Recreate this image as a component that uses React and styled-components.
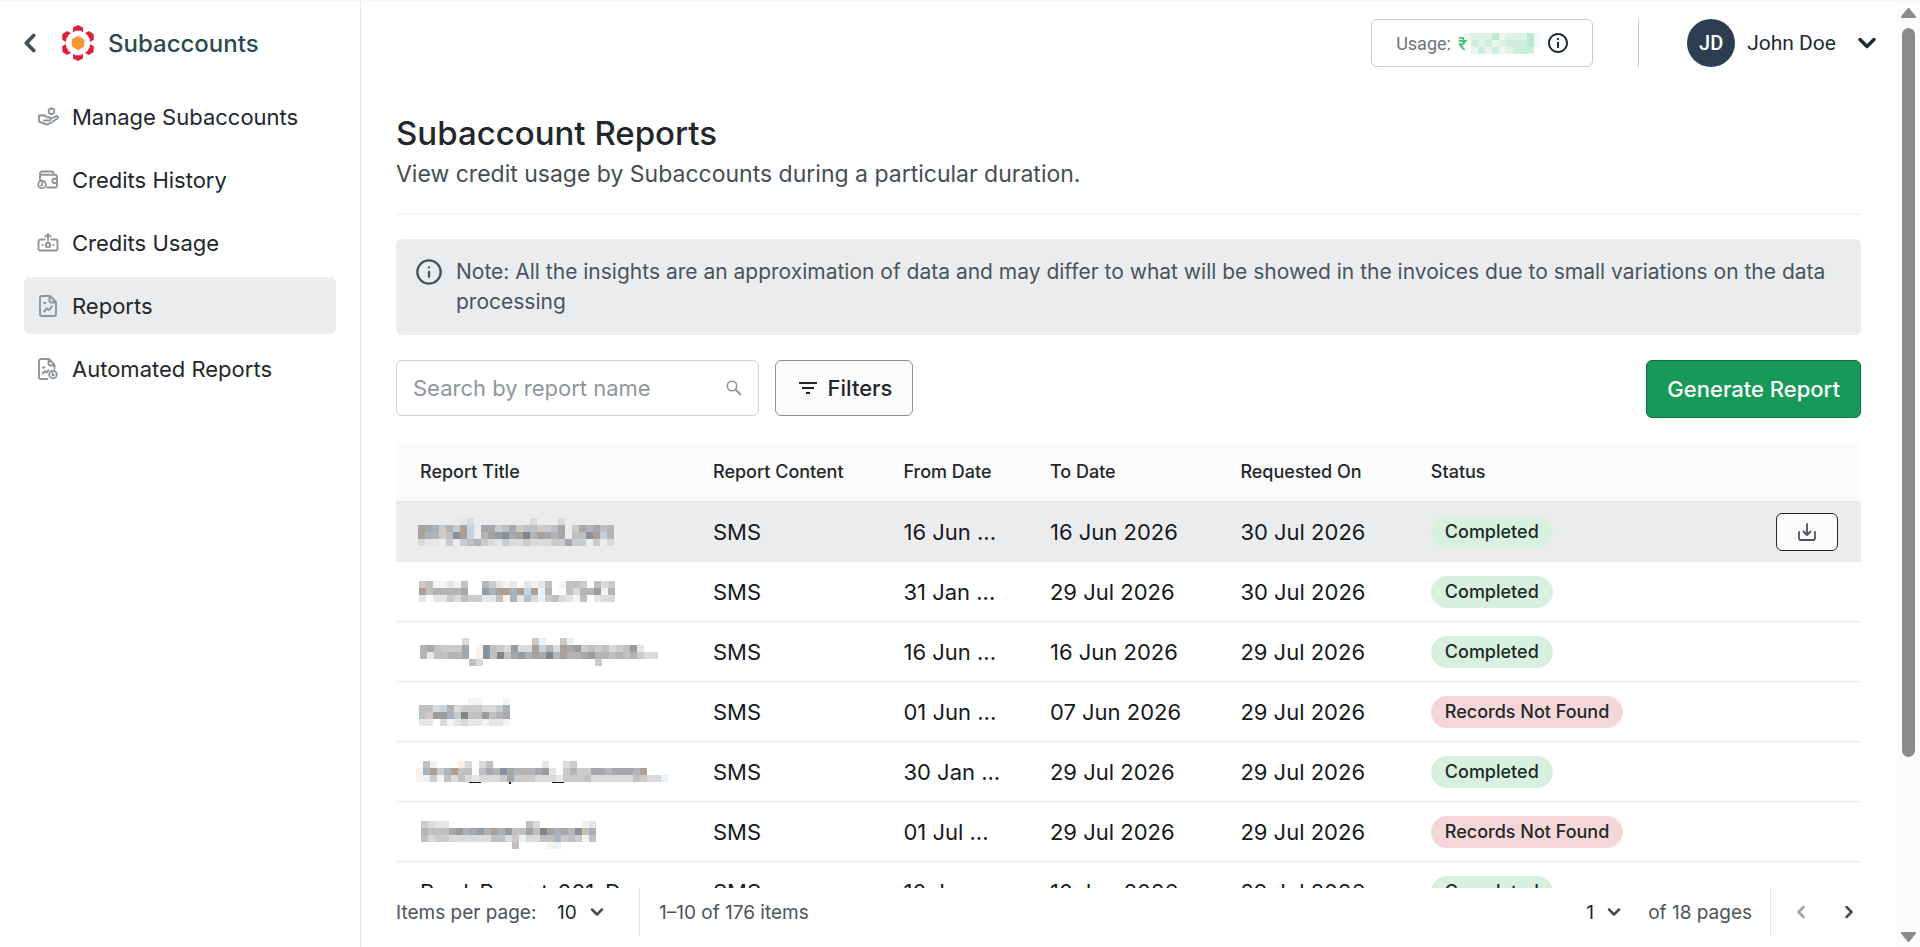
import React, { useState } from 'react'
import styled, { createGlobalStyle } from 'styled-components'
import { ChevronDown, ChevronLeft, ChevronRight, Info } from 'lucide-react'
import { MdFilterList, MdInfoOutline } from 'react-icons/md'

const NAV = [
    { label: 'Manage Subaccounts', icon: 'hand' },
    { label: 'Credits History', icon: 'wallet' },
    { label: 'Credits Usage', icon: 'cash' },
    { label: 'Reports', icon: 'report', active: true },
    { label: 'Automated Reports', icon: 'auto' },
]

// one letter per mosaic cell, '.' is empty
const SHADES = {
    1: '#f4f4f4', 2: '#e5e6e7', 3: '#d8dadb', 4: '#cacbcd', 5: '#bfc0c2', 6: '#b2b4b6', 7: '#a5a7aa', 8: '#999b9d', 9: '#828588',
    b: '#c6d2df', B: '#a9b2bb', d: '#8a919c', w: '#d0c8c4', W: '#aba098', c: '#f8f2ea', i: '#eaf1f8',
    h: '#e8f7f0', g: '#ddf3e7', G: '#cdeede', H: '#bce9d0', y: '#eefaff',
}

const ROWS = [
    {
        x: -2,
        mosaic: ['......23........3...3.......', 'W7B464Wb.774574554457.w76756', 'WB6w5dWb.6W8d7W96W767.55dWb6', '322.4.456432433433344744.4.3'],
        from: '16 Jun ...', to: '16 Jun 2026', on: '30 Jul 2026', status: 'Completed', hovered: true,
    },
    {
        x: -1,
        mosaic: ['w511215..64212.2125.1554.534', 'W566667..8BWWBWbWi6..5366816', '2.2243544225cB253i453215.233'],
        from: '31 Jan ...', to: '29 Jul 2026', on: '30 Jul 2026', status: 'Completed',
    },
    {
        x: 0,
        mosaic: ['......3.........wi..wi............', '6754447.cd543833Wb63W78454534582..', '6255667.cd59578BW796W6678665656433', '.......53................4........'],
        from: '16 Jun ...', to: '16 Jun 2026', on: '29 Jul 2026', status: 'Completed',
    },
    {
        x: -1,
        mosaic: ['.......11...1', '553b63444334B', '5w88B49558567', '22.312322c221'],
        from: '01 Jun ...', to: '07 Jun 2026', on: '29 Jul 2026', status: 'Records Not Found',
    },
    {
        x: -4,
        mosaic: ['.5i...c3.35.......2..34.............', 'cBW46W55.576d7666782.46447767776W...', 'ciw153532333474w4333244453333335433i'],
        marks: [[49, 12, 1], [89, 2, 2], [132, 12, 1]],
        from: '30 Jan ...', to: '29 Jul 2026', on: '29 Jul 2026', status: 'Completed',
    },
    {
        x: 1,
        y: 3,
        mosaic: ['4322...........53......c2', '655578B78BWB855W59WB76d5B', '5344333333553wi3355B454c5', '.............5....ci.....'],
        from: '01 Jul ...', to: '29 Jul 2026', on: '29 Jul 2026', status: 'Records Not Found',
    },
    {
        title: 'Prod_Report_001_D...',
        from: '10 Jun ...', to: '10 Jun 2026', on: '29 Jul 2026', status: 'Completed',
    },
]

const USAGE = ['hgggHhgggHy', '.GgGhgGGGHy', '.hGhGhgGGG.']

const Mosaic = ({ cells, x = 0, y = 0, marks = [] }) => (
    <MosaicSvg width={cells[0].length * 7} height={cells.length * 7} shapeRendering="crispEdges" aria-hidden="true">
        {cells.map((line, r) => line.split('').map((key, c) => (
            SHADES[key] && <rect key={`${r}-${c}`} x={x + c * 7} y={y + r * 7} width="7" height="7" fill={SHADES[key]} />
        )))}
        {marks.map(([left, width, height]) => (
            <rect key={left} x={left} y={cells.length * 7} width={width} height={height} fill="#16191c" />
        ))}
    </MosaicSvg>
)

const Logo = () => (
    <svg width="36" height="36" viewBox="-18 -18 36 36" aria-hidden="true">
        <path d="M0-7.2 6.2-3.6V3.6L0 7.2-6.2 3.6V-3.6z" fill="#f79634" />
        {[0, 60, 120, 180, 240, 300].map(deg => (
            <path key={deg} transform={`rotate(${deg})`} d="M0-18 5-15.400V-10.800L2.600-12.200H-2.600L-5-10.800V-15.400z" fill="#e01f3d" />
        ))}
    </svg>
)

const NavIcon = ({ name }) => {
    const shapes = {
        hand: (
            <>
                <path d="M14.500 2.200 17.200 3.700V6.800L14.500 8.300 11.800 6.800V3.700z" />
                <path d="M7 14.500h5a1.600 1.600 0 0 0 0-3.200H9.800L7.500 9.300 2 9.500V15.500L9.500 18.500 13 17.500 20.300 12.500a1.300 1.300 0 0 0-1.500-2.200L14 12.500" />
            </>
        ),
        wallet: (
            <>
                <path d="M3 11V4.500a2 2 0 0 1 2-2H14.500a2 2 0 0 1 2 2V6M3 5.800H18a2 2 0 0 1 2 2V16.500a2 2 0 0 1-2 2H10" />
                <path d="M20 9.800H17.500a2 2 0 0 0 0 4.200H20" />
                <circle cx="5" cy="15.500" r="3.800" />
                <path d="M5.300 13.800V15.800L4 16.600" />
            </>
        ),
        cash: (
            <>
                <path d="M7.500 7.500H3.500a2 2 0 0 0-2 2V16.500a2 2 0 0 0 2 2H18.500a2 2 0 0 0 2-2V9.500a2 2 0 0 0-2-2H14.500" />
                <path d="M11 8.500V2.500M8.500 4.500 11 2.200 13.500 4.500" />
                <circle cx="11" cy="13" r="2.200" />
                <path d="M5.500 13h.1M16.500 13h.1" />
            </>
        ),
        report: (
            <>
                <path d="M13 1H5a2 2 0 0 0-2 2V19a2 2 0 0 0 2 2H17a2 2 0 0 0 2-2V7zM12.500 1.500V5.500a2 2 0 0 0 2 2H18.500" />
                <path d="M7 8h1.500M7 16.500 10 13.500 12 15 15 11.500" />
            </>
        ),
        auto: (
            <>
                <path d="M10.500 21H4a2 2 0 0 1-2-2V3a2 2 0 0 1 2-2H12L17.500 7V10.500M11.500 1.500V5.500a2 2 0 0 0 2 2H17" />
                <path d="M6 9.500h1.500M5.500 15.500 8 13 10 14.500 11.500 12" />
                <circle cx="16" cy="16.500" r="3.800" />
                <path d="M15.500 15V17H17" />
            </>
        ),
    }
    return (
        <svg width="22" height="22" viewBox="0 0 22 22" fill="none" stroke="#8f969d" strokeWidth="1.900" strokeLinecap="round" strokeLinejoin="round" aria-hidden="true">
            {shapes[name]}
        </svg>
    )
}

const SearchIcon = () => (
    <svg width="16" height="16" viewBox="0 0 16 16" fill="none" stroke="#8f969d" strokeWidth="1.600" aria-hidden="true">
        <circle cx="6" cy="6" r="4.700" />
        <path d="M9.500 9.500 15 15" strokeWidth="2" />
    </svg>
)

const DownloadIcon = () => (
    <svg width="18" height="18" viewBox="0 0 18 18" fill="none" stroke="#4a525e" strokeWidth="1.800" strokeLinecap="round" strokeLinejoin="round" aria-hidden="true">
        <path d="M9 1V12M5.500 8.500 9 12 12.500 8.500M1 9V15.500a1.500 1.500 0 0 0 1.500 1.500H15.500a1.500 1.500 0 0 0 1.500-1.500V9" />
    </svg>
)

const Dropdown = ({ label, options, value, onChange }) => (
    <SelectWrap>
        <select aria-label={label} value={value} onChange={e => onChange(e.target.value)}>
            {options.map(o => <option key={o}>{o}</option>)}
        </select>
        <ChevronDown size={20} strokeWidth={3} />
    </SelectWrap>
)

const App = () => {
    const [query, setQuery] = useState('')
    const [perPage, setPerPage] = useState('10')
    const [page, setPage] = useState('1')

    return (
        <>
            <GlobalStyle />
            <Shell>
                <Sidebar>
                    <Brand>
                        <BackButton type="button" aria-label="Back"><ChevronLeft size={30} strokeWidth={3} /></BackButton>
                        <Logo />
                        <span>Subaccounts</span>
                    </Brand>
                    <Nav>
                        {NAV.map(item => (
                            <NavLink key={item.label} href="#" $active={item.active}>
                                <NavIcon name={item.icon} />
                                {item.label}
                            </NavLink>
                        ))}
                    </Nav>
                </Sidebar>

                <Main>
                    <TopBar>
                        <Usage>
                            Usage:
                            <Amount>₹<Mosaic cells={USAGE} x={-3} /></Amount>
                            <MdInfoOutline size={24} color="#1f2a37" />
                        </Usage>
                        <Divider />
                        <UserButton type="button">
                            <Avatar>JD</Avatar>
                            John Doe
                            <ChevronDown size={28} strokeWidth={3} />
                        </UserButton>
                    </TopBar>

                    <Content>
                        <PageHead>
                            <h1>Subaccount Reports</h1>
                            <p>View credit usage by Subaccounts during a particular duration.</p>
                        </PageHead>

                        <Note>
                            <Info size={28} />
                            <p>Note: All the insights are an approximation of data and may differ to what will be showed in the invoices due to small variations on the data processing</p>
                        </Note>

                        <Toolbar>
                            <SearchBox>
                                <input type="text" aria-label="Search by report name" placeholder="Search by report name" value={query} onChange={e => setQuery(e.target.value)} />
                                <SearchIcon />
                            </SearchBox>
                            <FilterButton type="button"><MdFilterList size={24} />Filters</FilterButton>
                            <GenerateButton type="button">Generate Report</GenerateButton>
                        </Toolbar>

                        <TableArea>
                            <Table>
                                <colgroup>
                                    <col width="20%" />
                                    <col width="13%" />
                                    <col width="10%" />
                                    <col width="13%" />
                                    <col width="13%" />
                                    <col width="20%" />
                                    <col width="11%" />
                                </colgroup>
                                <thead>
                                    <tr>
                                        <th>Report Title</th>
                                        <th>Report Content</th>
                                        <th>From Date</th>
                                        <th>To Date</th>
                                        <th>Requested On</th>
                                        <th>Status</th>
                                        <th aria-label="Actions" />
                                    </tr>
                                </thead>
                                <tbody>
                                    {ROWS.map((row, i) => (
                                        <Row key={i} $hovered={row.hovered}>
                                            <td>{row.mosaic ? <Mosaic cells={row.mosaic} x={row.x} y={row.y} marks={row.marks} /> : row.title}</td>
                                            <td>SMS</td>
                                            <td>{row.from}</td>
                                            <td>{row.to}</td>
                                            <td>{row.on}</td>
                                            <td><Badge $failed={row.status !== 'Completed'}>{row.status}</Badge></td>
                                            <td>{row.hovered && <DownloadButton type="button" aria-label="Download"><DownloadIcon /></DownloadButton>}</td>
                                        </Row>
                                    ))}
                                </tbody>
                            </Table>
                        </TableArea>

                        <Pagination>
                            <PerPage>
                                Items per page:
                                <Dropdown label="Items per page" options={['10', '20', '50']} value={perPage} onChange={setPerPage} />
                            </PerPage>
                            <Range>1–10 of 176 items</Range>
                            <Pages>
                                <Dropdown label="Page" options={['1', '2', '3']} value={page} onChange={setPage} />
                                of 18 pages
                            </Pages>
                            <Arrows>
                                <button type="button" aria-label="Previous page" disabled><ChevronLeft size={20} strokeWidth={3} /></button>
                                <button type="button" aria-label="Next page"><ChevronRight size={20} strokeWidth={3} /></button>
                            </Arrows>
                        </Pagination>
                    </Content>
                </Main>

                <ScrollTrack aria-hidden="true">
                    <svg width="15" height="10" viewBox="0 0 15 10"><path d="M7.500 1 14 9H1z" fill="#8b8b8b" stroke="#8b8b8b" strokeLinejoin="round" strokeWidth="2" /></svg>
                    <ScrollThumb />
                    <svg width="15" height="10" viewBox="0 0 15 10"><path d="M7.500 9 14 1H1z" fill="#8b8b8b" stroke="#8b8b8b" strokeLinejoin="round" strokeWidth="2" /></svg>
                </ScrollTrack>
            </Shell>
        </>
    )
}

const GlobalStyle = createGlobalStyle`
    * {
        box-sizing: border-box;
    }
    body {
        margin: 0;
        background: #fff;
        color: #22272b;
        font-family: 'Inter', 'Noto Sans', sans-serif;
        font-size: 22px;
    }
    button, input, select {
        font: inherit;
        color: inherit;
    }
    button {
        cursor: pointer;
    }
    h1, p {
        margin: 0;
    }
`

const Shell = styled.div`
    display: flex;
    height: 100vh;
    overflow: hidden;
    border-top: 1px solid #fdf3f3;
`

const Sidebar = styled.aside`
    flex: 0 0 361px;
    padding: 18px 24px;
    border-right: 1px solid #e6e7ea;
`

const Brand = styled.div`
    display: flex;
    align-items: center;
    height: 48px;
    font-size: 24px;
    font-weight: 500;
    color: #2b4a50;

    span {
        margin-left: 12px;
    }
`

const BackButton = styled.button`
    display: flex;
    padding: 0;
    margin: 0 15px 0 -9px;
    border: 0;
    background: none;
    color: #454d58;
`

const Nav = styled.nav`
    display: flex;
    flex-direction: column;
    gap: 6px;
    margin-top: 21px;
`

const NavLink = styled.a`
    display: flex;
    align-items: center;
    gap: 13px;
    height: 57px;
    padding: 0 13px;
    border-radius: 6px;
    background: ${({ $active }) => ($active ? '#ebecee' : 'transparent')};
    color: #22272b;
    text-decoration: none;
`

const Main = styled.main`
    display: flex;
    flex-direction: column;
    flex: 1;
    min-width: 0;
`

const TopBar = styled.header`
    display: flex;
    align-items: center;
    justify-content: flex-end;
    padding: 18px 16px 0 36px;
    font-family: 'Roboto', sans-serif;
`

const Usage = styled.div`
    display: flex;
    align-items: center;
    width: 222px;
    height: 48px;
    padding: 0 22px 0 24px;
    border: 1px solid #c3cad9;
    border-radius: 6px;
    font-size: 18px;
    color: #6a737d;

    > svg {
        margin-left: auto;
    }
`

const Amount = styled.span`
    display: flex;
    align-items: center;
    margin-left: 7px;
    color: #22c26b;
`

const Divider = styled.span`
    width: 1px;
    height: 48px;
    margin: 0 48px 0 45px;
    background: #c3cad9;
`

const UserButton = styled.button`
    display: flex;
    align-items: center;
    gap: 12px;
    padding: 0;
    border: 0;
    background: none;
    font-size: 21px;
    color: #1f2a37;

    svg {
        margin-left: 5px;
    }
`

const Avatar = styled.span`
    display: grid;
    place-items: center;
    width: 48px;
    height: 48px;
    border-radius: 50%;
    background: #2d3e50;
    color: #fff;
    font-size: 20px;
    font-weight: 500;
`

const Content = styled.section`
    display: flex;
    flex-direction: column;
    flex: 1;
    min-height: 0;
    padding: 46px 36px 11px 35px;
`

const PageHead = styled.div`
    padding-bottom: 25px;
    border-bottom: 1px solid #ebecee;

    h1 {
        font-size: 33px;
        font-weight: 500;
        line-height: 40px;
    }

    p {
        margin-top: 6px;
        font-size: 23px;
        line-height: 30px;
        color: #454d55;
    }
`

const Note = styled.div`
    display: flex;
    gap: 13px;
    margin-top: 24px;
    padding: 18px 20px 18px 19px;
    border-radius: 6px;
    background: #ebecee;
    color: #4b535c;
    font-size: 21px;
    line-height: 30px;

    svg {
        flex: none;
        margin-top: 1px;
    }
`

const Toolbar = styled.div`
    display: flex;
    gap: 16px;
    margin: 25px 0 24px;
`

const SearchBox = styled.div`
    display: flex;
    align-items: center;
    width: 363px;
    height: 56px;
    padding: 0 16px;
    border: 1px solid #cdd0d4;
    border-radius: 6px;

    input {
        flex: 1;
        min-width: 0;
        padding: 0;
        border: 0;
        outline: 0;
        background: none;
        color: #22272b;
    }

    input::placeholder {
        color: #8f969d;
    }
`

const FilterButton = styled.button`
    display: flex;
    align-items: center;
    justify-content: center;
    gap: 8px;
    width: 138px;
    height: 56px;
    padding: 0;
    border: 1px solid #8d929c;
    border-radius: 6px;
    background: #fbfbfb;
    font-weight: 500;
`

const GenerateButton = styled.button`
    height: 58px;
    margin-left: auto;
    padding: 0 20px;
    border: 1px solid #0b7540;
    border-radius: 6px;
    background: #179957;
    color: #fff;
    font-weight: 500;
`

const TableArea = styled.div`
    flex: 1;
    min-height: 0;
    overflow: hidden;
`

const Table = styled.table`
    width: 100%;
    table-layout: fixed;
    border-collapse: separate;
    border-spacing: 0;

    th, td {
        height: 60px;
        padding: 0 0 0 24px;
        border-bottom: 1px solid #e9eaec;
        text-align: left;
        white-space: nowrap;
    }

    th {
        background: #fbfbfb;
        font-size: 18px;
        font-weight: 500;
    }

    td {
        color: #16191c;
    }

    td:last-child {
        padding-right: 23px;
    }
`

const Row = styled.tr`
    background: ${({ $hovered }) => ($hovered ? '#ebecee' : '#fff')};
`

const Badge = styled.span`
    display: inline-block;
    padding: 0 14px;
    border-radius: 16px;
    background: ${({ $failed }) => ($failed ? '#f5d7d9' : '#d8f1df')};
    color: #22272b;
    font-size: 18px;
    font-weight: 500;
    line-height: 32px;
    vertical-align: middle;
`

const DownloadButton = styled.button`
    display: grid;
    place-items: center;
    width: 62px;
    height: 38px;
    margin-left: auto;
    padding: 0;
    border: 1px solid #22272b;
    border-radius: 6px;
    background: #fbfbfb;
`

const Pagination = styled.footer`
    display: flex;
    align-items: center;
    height: 48px;
    background: #fff;
    color: #4b535c;
    font-size: 19px;
`

const SelectWrap = styled.span`
    display: inline-grid;
    align-items: center;
    color: #22272b;

    select, svg {
        grid-area: 1 / 1;
    }

    select {
        appearance: none;
        padding: 0 26px 0 0;
        border: 0;
        background: none;
    }

    svg {
        justify-self: end;
        color: #454d58;
        pointer-events: none;
    }
`

const PerPage = styled.div`
    display: flex;
    align-items: center;
    justify-content: space-between;
    width: 244px;
    height: 48px;
    padding-right: 32px;
    border-right: 1px solid #e6e7ea;
`

const Range = styled.span`
    margin-left: 19px;
`

const Pages = styled.div`
    display: flex;
    align-items: center;
    gap: 24px;
    margin-left: auto;
`

const Arrows = styled.div`
    display: flex;
    align-items: center;
    gap: 28px;
    height: 48px;
    margin-left: 18px;
    padding: 0 2px 0 20px;
    border-left: 1px solid #e6e7ea;

    button {
        display: flex;
        padding: 0;
        border: 0;
        background: none;
        color: #454d58;
    }

    button:disabled {
        color: #9aa0a6;
    }
`

const ScrollTrack = styled.div`
    display: flex;
    flex-direction: column;
    align-items: center;
    flex: 0 0 23px;
    padding: 7px 0 5px;
    background: #fcfcfc;

    svg {
        flex: none;
    }

    svg:last-child {
        margin-top: auto;
    }
`

const ScrollThumb = styled.div`
    width: 13px;
    height: 78%;
    margin-top: 10px;
    border-radius: 7px;
    background: #8b8b8b;
`

const MosaicSvg = styled.svg`
    display: block;
    overflow: visible;
`

export default App
